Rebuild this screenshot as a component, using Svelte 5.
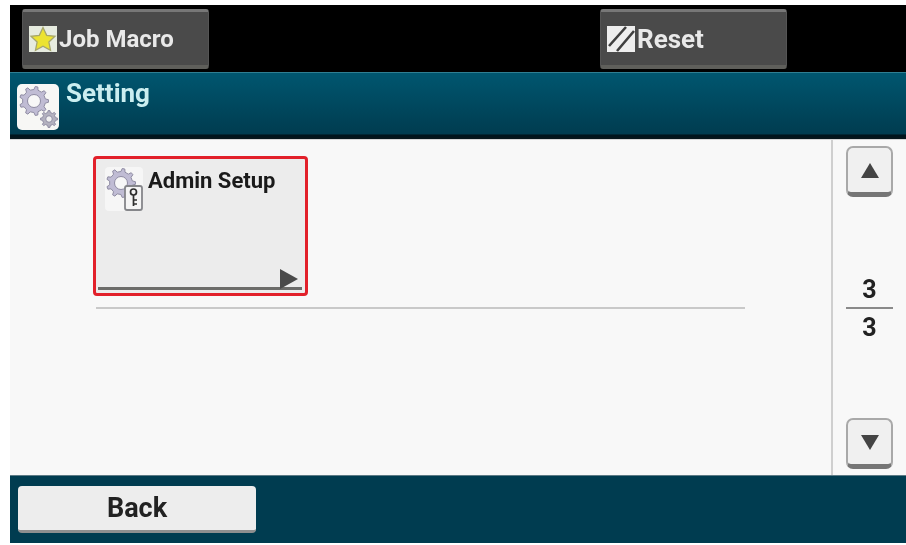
<script>
  function gear(cx, cy, ro, ri, teeth) {
    const pts = [];
    const step = (Math.PI * 2) / teeth;
    for (let i = 0; i < teeth; i++) {
      const a = i * step;
      const o = [-0.26, -0.13, 0.13, 0.26];
      const r = [ri, ro, ro, ri];
      o.forEach((f, k) => {
        const t = a + f * step;
        pts.push(`${(cx + Math.cos(t) * r[k]).toFixed(2)},${(cy + Math.sin(t) * r[k]).toFixed(2)}`);
      });
    }
    return `M${pts.join('L')}Z`;
  }
  const largeGear = gear(17, 17, 14.5, 11.5, 9);
  const smallGear = gear(32, 35, 8.5, 6.6, 8);
  const keyGear = gear(16, 16, 14.5, 11.5, 9);
</script>

<div class="screen">
  <header class="topbar">
    <button class="dark-btn macro">
      <svg class="btn-icon" viewBox="0 0 28 26" aria-hidden="true">
        <rect width="28" height="26" fill="#e6ebdf" />
        <path d="M14 1.500l3.700 7.800 8.300 1-6.100 5.700 1.600 8.300-7.500-4.100-7.500 4.100 1.600-8.300L2 10.300l8.300-1z" fill="#ece331" stroke="#a6a66c" stroke-width="1.300" />
      </svg>
      <span>Job Macro</span>
    </button>
    <button class="dark-btn reset">
      <svg class="btn-icon" viewBox="0 0 28 26" aria-hidden="true">
        <rect width="28" height="26" fill="#eeeeee" />
        <path d="M2 20L19 1M10 25L27 5" stroke="#3f3f3f" stroke-width="2.600" fill="none" />
      </svg>
      <span>Reset</span>
    </button>
  </header>

  <div class="titlebar">
    <div class="title-icon">
      <svg viewBox="0 0 42 46" aria-hidden="true">
        <path d={largeGear} fill="#c0bcd4" stroke="#8f8ca3" stroke-width="1" />
        <circle cx="17" cy="17" r="6.500" fill="#f7f7f7" stroke="#8f8ca3" stroke-width="1" />
        <path d={smallGear} fill="#b3b1bf" stroke="#8f8ca3" stroke-width="1" />
        <circle cx="32" cy="35" r="3.300" fill="#f0f0f0" stroke="#8f8ca3" stroke-width="1" />
      </svg>
    </div>
    <h1>Setting</h1>
  </div>

  <div class="content">
    <main class="list">
      <button class="tile">
        <span class="tile-icon">
          <svg viewBox="0 0 38 44" aria-hidden="true">
            <path d={keyGear} fill="#c0bcd4" stroke="#8f8ca3" stroke-width="1" />
            <circle cx="16" cy="16" r="6.500" fill="#f7f7f7" stroke="#8f8ca3" stroke-width="1" />
            <rect x="20" y="19" width="17" height="24" rx="2" fill="#f5f5f5" stroke="#85868a" stroke-width="1.800" />
            <circle cx="28.500" cy="25" r="3" fill="none" stroke="#303030" stroke-width="1.700" />
            <path d="M28.500 28v11M28.500 33h3.500M28.500 37h3.500" stroke="#303030" stroke-width="1.700" fill="none" />
          </svg>
        </span>
        <span class="tile-label">Admin Setup</span>
        <span class="tile-rule"></span>
        <span class="tile-arrow"></span>
      </button>
      <div class="rule"></div>
    </main>

    <aside class="pager">
      <button class="page-btn up" aria-label="Previous page"><span class="tri-up"></span></button>
      <div class="count">
        <span>3</span>
        <i></i>
        <span>3</span>
      </div>
      <button class="page-btn down" aria-label="Next page"><span class="tri-down"></span></button>
    </aside>
  </div>

  <footer class="footer">
    <button class="back">Back</button>
  </footer>
</div>

<style>
  :global(body) {
    margin: 0;
    background: #fff;
  }
  .screen {
    width: 896px;
    height: 538px;
    margin: 5px 0 0 10px;
    display: flex;
    flex-direction: column;
    font-family: Roboto, "Liberation Sans", sans-serif;
    overflow: hidden;
    filter: blur(0.6px);
  }
  button {
    font-family: inherit;
    padding: 0;
    cursor: pointer;
  }
  .topbar {
    height: 67px;
    flex: none;
    background: #000;
    display: flex;
    align-items: flex-start;
    padding: 4px 0 0 12px;
    box-sizing: border-box;
  }
  .dark-btn {
    width: 187px;
    height: 60px;
    box-sizing: border-box;
    display: flex;
    align-items: center;
    gap: 2px;
    padding: 0 0 0 6px;
    border: 1px solid #555;
    border-top: 3px solid #777;
    border-bottom: 4px solid #5f5f5b;
    border-radius: 3px;
    background: #4a4a4a;
    color: #e9e9e9;
    font-size: 24px;
    font-weight: 700;
  }
  .reset {
    margin-left: 391px;
    font-size: 26px;
  }
  .btn-icon {
    width: 28px;
    height: 26px;
    flex: none;
  }
  .titlebar {
    height: 67px;
    flex: none;
    box-sizing: border-box;
    display: flex;
    align-items: flex-start;
    padding: 11px 0 0 7px;
    gap: 7px;
    background: linear-gradient(#00566f, #003c50 95%, #00141c 97%);
    border-top: 1px solid #2f7e92;
    border-bottom: 2px solid #05151b;
  }
  .title-icon {
    width: 42px;
    height: 46px;
    background: #f7f7f5;
    border-radius: 5px;
    flex: none;
  }
  .title-icon svg {
    display: block;
    width: 100%;
    height: 100%;
  }
  h1 {
    margin: -4px 0 0;
    color: #cbeef0;
    font-size: 26px;
    font-weight: 700;
    line-height: 26px;
  }
  .content {
    flex: 1;
    min-height: 0;
    display: flex;
    background: #f8f8f8;
    border-top: 1px solid #d5d5d5;
  }
  .list {
    width: 823px;
    flex: none;
    box-sizing: border-box;
    padding: 16px 0 0 83px;
    border-right: 2px solid #cfcfcf;
  }
  .tile {
    position: relative;
    display: block;
    width: 215px;
    height: 140px;
    box-sizing: border-box;
    border: 3px solid #e2202a;
    border-radius: 4px;
    background: #ececec;
    text-align: left;
    color: #1a1a1a;
  }
  .tile-icon {
    position: absolute;
    left: 9px;
    top: 8px;
    width: 38px;
    height: 44px;
    background: #f6f6f6;
    border-radius: 4px;
  }
  .tile-icon svg {
    display: block;
    width: 100%;
    height: 100%;
  }
  .tile-label {
    position: absolute;
    left: 52px;
    top: 9px;
    font-size: 22px;
    font-weight: 700;
    white-space: nowrap;
  }
  .tile-rule {
    position: absolute;
    left: 2px;
    right: 3px;
    bottom: 3px;
    height: 3px;
    background: #6c6c6a;
  }
  .tile-arrow {
    position: absolute;
    right: 7px;
    bottom: 4px;
    width: 0;
    height: 0;
    border-left: 18px solid #4a4a4a;
    border-top: 10px solid transparent;
    border-bottom: 10px solid transparent;
  }
  .rule {
    width: 649px;
    height: 2px;
    margin: 11px 0 0 3px;
    background: #c9c9c9;
  }
  .pager {
    flex: 1;
    box-sizing: border-box;
    padding: 6px 0 0 13px;
  }
  .page-btn {
    width: 47px;
    height: 51px;
    box-sizing: border-box;
    display: flex;
    align-items: center;
    justify-content: center;
    border: 2px solid #a9a9a9;
    border-bottom: 5px solid #767676;
    border-radius: 7px;
    background: #f0f0f0;
  }
  .tri-up {
    width: 0;
    height: 0;
    border-left: 9px solid transparent;
    border-right: 9px solid transparent;
    border-bottom: 15px solid #444;
  }
  .tri-down {
    width: 0;
    height: 0;
    border-left: 9px solid transparent;
    border-right: 9px solid transparent;
    border-top: 15px solid #444;
  }
  .count {
    width: 47px;
    margin-top: 79px;
    display: flex;
    flex-direction: column;
    align-items: center;
    color: #222;
    font-size: 25px;
    font-weight: 700;
    line-height: 28px;
  }
  .count i {
    display: block;
    width: 47px;
    height: 2px;
    margin: 3px 0 5px;
    background: #8a8a8a;
  }
  .count + .page-btn {
    margin-top: 76px;
  }
  .footer {
    height: 68px;
    flex: none;
    box-sizing: border-box;
    padding: 10px 0 0 8px;
    background: #003c50;
    border-top: 1px solid #5c7a85;
  }
  .back {
    display: block;
    width: 238px;
    height: 47px;
    box-sizing: border-box;
    border: none;
    border-bottom: 3px solid #8f8f8f;
    border-radius: 4px;
    background: #ededed;
    color: #222;
    font-size: 27px;
    font-weight: 700;
  }
</style>
